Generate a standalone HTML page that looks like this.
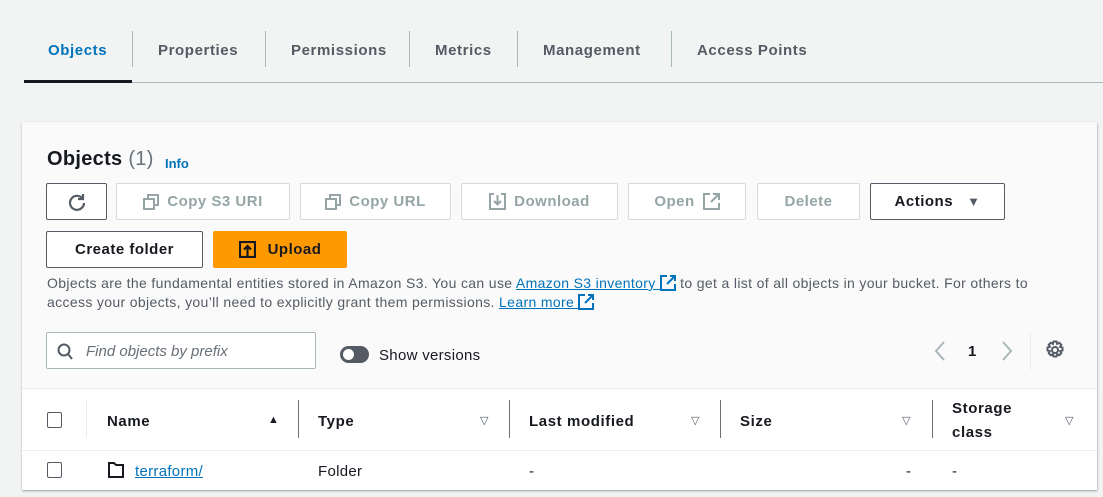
<!DOCTYPE html>
<html><head><meta charset="utf-8"><style>
*{box-sizing:border-box;margin:0;padding:0}
body{width:1103px;height:497px;background:#f2f3f3;font-family:"Liberation Sans",sans-serif;position:relative;overflow:hidden;color:#16191f}
.a{position:absolute}
.tab{position:absolute;top:42px;font-size:15px;font-weight:bold;color:#545b64;letter-spacing:.6px}
.sep{position:absolute;top:31px;width:1px;height:36px;background:#aab7b8}
.btn{position:absolute;height:37px;border:1px solid #d5dbdb;background:#fff;border-radius:2px;font-size:15px;font-weight:bold;color:#95a5a6;display:flex;align-items:center;justify-content:center;gap:8px;letter-spacing:.5px}
.btn.on{border:1px solid #545b64;color:#16191f}
.t{font-size:14px;color:#545b64;position:absolute;left:47px;letter-spacing:.35px;white-space:nowrap}
.lnk{color:#0073bb;text-decoration:underline}
.hd{position:absolute;top:413px;font-size:15px;font-weight:bold;color:#16191f;letter-spacing:.6px}
.cs{position:absolute;top:400px;width:1px;height:38px;background:#687078}
.tri{position:absolute;top:414px;font-size:11px;color:#545b64}
.cb{position:absolute;width:15px;height:16px;border:1.5px solid #545b64;border-radius:2px;background:#fff}
.ext{display:inline-block;vertical-align:-3px}
</style></head><body>
<div class="tab" style="left:48px;color:#0073bb">Objects</div>
<div class="sep" style="left:132px"></div>
<div class="tab" style="left:158px">Properties</div>
<div class="sep" style="left:265px"></div>
<div class="tab" style="left:291px">Permissions</div>
<div class="sep" style="left:409px"></div>
<div class="tab" style="left:435px">Metrics</div>
<div class="sep" style="left:517px"></div>
<div class="tab" style="left:543px">Management</div>
<div class="sep" style="left:671px"></div>
<div class="tab" style="left:697px">Access Points</div>
<div class="a" style="left:24px;top:82px;width:1079px;height:1px;background:#aab7b8"></div>
<div class="a" style="left:24px;top:80px;width:108px;height:3px;background:#16191f"></div>

<div class="a" style="left:22px;top:122px;width:1075px;height:368px;background:#fafafa;box-shadow:0 1px 2px rgba(0,28,36,.3),1px 1px 1px rgba(0,28,36,.1)"></div>
<div class="a" style="left:22px;top:388px;width:1075px;height:102px;background:#fff;border-top:1px solid #eaeded"></div>

<div class="a" style="left:47px;top:148px;font-size:20px;font-weight:bold;letter-spacing:.3px">Objects <span style="font-weight:normal;color:#687078">(1)</span></div>
<div class="a" style="left:165px;top:156px;font-size:13px;font-weight:bold;color:#0073bb">Info</div>

<div class="btn on" style="left:46px;top:183px;width:61px"><svg width="20" height="20" viewBox="0 0 20 20" fill="none" stroke="#545b64" stroke-width="2.2"><path d="M15.5 6.5A7 7 0 1 0 17 11"/><path d="M16 2v5h-5"/></svg></div>
<div class="btn" style="left:116px;top:183px;width:174px"><svg width="16" height="16" fill="none" stroke="#95a5a6" stroke-width="2"><rect x="1" y="5" width="10" height="10"/><path d="M5 5V1h10v10h-4"/></svg>Copy S3 URI</div>
<div class="btn" style="left:300px;top:183px;width:151px"><svg width="16" height="16" fill="none" stroke="#95a5a6" stroke-width="2"><rect x="1" y="5" width="10" height="10"/><path d="M5 5V1h10v10h-4"/></svg>Copy URL</div>
<div class="btn" style="left:461px;top:183px;width:157px"><svg width="17" height="17" fill="none" stroke="#95a5a6" stroke-width="2"><path d="M5 1H1v15h15V1h-4M8.5 2v9M5 8l3.5 3.5L12 8"/></svg>Download</div>
<div class="btn" style="left:628px;top:183px;width:118px">Open <svg width="17" height="17" fill="none" stroke="#95a5a6" stroke-width="2"><path d="M7 1H1v15h15v-6M10 1h6v6M16 1L8 9"/></svg></div>
<div class="btn" style="left:757px;top:183px;width:103px">Delete</div>
<div class="btn on" style="left:870px;top:183px;width:135px;gap:14px">Actions <span style="font-size:13px;color:#545b64">▼</span></div>

<div class="btn on" style="left:46px;top:231px;width:157px">Create folder</div>
<div class="btn" style="left:213px;top:231px;width:134px;background:#ff9900;border-color:#ff9900;color:#16191f;gap:12px"><svg width="17" height="17" fill="none" stroke="#16191f" stroke-width="2.2"><rect x="1" y="1" width="15" height="15"/><path d="M8.5 15V5M5 8.5l3.5-3.5L12 8.5"/></svg>Upload</div>

<div class="t" style="top:275px">Objects are the fundamental entities stored in Amazon S3. You can use <span class="lnk">Amazon S3 inventory <svg class="ext" width="16" height="16" fill="none" stroke="#0073bb" stroke-width="2"><path d="M7 1H1v14h14V9M10 1h5v5M15 1L7 9"/></svg></span> to get a list of all objects in your bucket. For others to</div>
<div class="t" style="top:294px">access your objects, you’ll need to explicitly grant them permissions. <span class="lnk">Learn more <svg class="ext" width="16" height="16" fill="none" stroke="#0073bb" stroke-width="2"><path d="M7 1H1v14h14V9M10 1h5v5M15 1L7 9"/></svg></span></div>

<div class="a" style="left:46px;top:332px;width:270px;height:37px;background:#fff;border:1px solid #aab7b8;border-radius:2px"></div>
<svg class="a" style="left:57px;top:343px" width="16" height="17" fill="none" stroke="#545b64" stroke-width="2"><circle cx="7" cy="7" r="5.5"/><path d="M11 11l4 5"/></svg>
<div class="a" style="left:86px;top:343px;font-size:15px;font-style:italic;color:#687078">Find objects by prefix</div>
<div class="a" style="left:340px;top:346px;width:29px;height:17px;border-radius:9px;background:#545b64"></div>
<div class="a" style="left:343px;top:349px;width:11px;height:11px;border-radius:50%;background:#fff"></div>
<div class="a" style="left:379px;top:347px;font-size:15px;color:#16191f;letter-spacing:.3px">Show versions</div>

<svg class="a" style="left:934px;top:341px" width="12" height="20" fill="none" stroke="#aab7b8" stroke-width="2"><path d="M10 1L2 10l8 9"/></svg>
<div class="a" style="left:968px;top:343px;font-size:15px;font-weight:bold">1</div>
<svg class="a" style="left:1001px;top:341px" width="12" height="20" fill="none" stroke="#aab7b8" stroke-width="2"><path d="M2 1l8 9-8 9"/></svg>
<div class="a" style="left:1030px;top:332px;width:1px;height:38px;background:#eaeded"></div>
<svg class="a" style="left:1045px;top:340px" width="20" height="20" viewBox="0 0 20 20" fill="none" stroke="#545b64" stroke-width="2"><circle cx="10" cy="10" r="3"/><path d="M8.5 1.5h3l.6 2.4 2.1-1.2 2.1 2.1-1.2 2.1 2.4.6v3l-2.4.6 1.2 2.1-2.1 2.1-2.1-1.2-.6 2.4h-3l-.6-2.4-2.1 1.2-2.1-2.1 1.2-2.1-2.4-.6v-3l2.4-.6-1.2-2.1 2.1-2.1 2.1 1.2z"/></svg>

<div class="cb" style="left:47px;top:412px"></div>
<div class="a" style="left:86px;top:400px;width:1px;height:38px;background:#eaeded"></div>
<div class="hd" style="left:107px">Name</div>
<div class="tri" style="left:268px;color:#16191f">▲</div>
<div class="cs" style="left:298px"></div>
<div class="hd" style="left:318px">Type</div>
<div class="tri" style="left:480px">▽</div>
<div class="cs" style="left:509px"></div>
<div class="hd" style="left:529px">Last modified</div>
<div class="tri" style="left:691px">▽</div>
<div class="cs" style="left:720px"></div>
<div class="hd" style="left:740px">Size</div>
<div class="tri" style="left:902px">▽</div>
<div class="cs" style="left:932px"></div>
<div class="hd" style="left:952px;top:397px;line-height:24px">Storage<br>class</div>
<div class="tri" style="left:1065px">▽</div>
<div class="a" style="left:22px;top:450px;width:1075px;height:1px;background:#eaeded"></div>

<div class="cb" style="left:47px;top:462px"></div>
<svg class="a" style="left:108px;top:462px" width="16" height="16" fill="none" stroke="#16191f" stroke-width="2"><path d="M1 1h5l2 2h7v12H1z"/></svg>
<div class="a" style="left:135px;top:463px;font-size:15px;color:#0073bb;text-decoration:underline;letter-spacing:.3px">terraform/</div>
<div class="a" style="left:318px;top:463px;font-size:15px;letter-spacing:.3px">Folder</div>
<div class="a" style="left:529px;top:463px;font-size:15px">-</div>
<div class="a" style="left:906px;top:463px;font-size:15px">-</div>
<div class="a" style="left:952px;top:463px;font-size:15px">-</div>
</body></html>
